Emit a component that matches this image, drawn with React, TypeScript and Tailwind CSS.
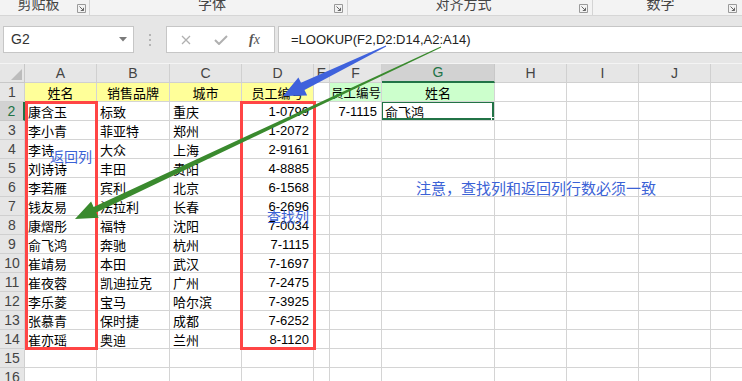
import React from "react";

const COLS = ["A", "B", "C", "D", "E", "F", "G", "H", "I", "J", ""];

type Cell = { t: string; align?: "l" | "c" | "r"; bg?: string; small?: boolean };

const names = ["康含玉", "李小青", "李诗", "刘诗诗", "李若雁", "钱友易", "康熠彤", "俞飞鸿", "崔靖易", "崔夜蓉", "李乐菱", "张慕青", "崔亦瑶"];
const brands = ["标致", "菲亚特", "大众", "丰田", "宾利", "法拉利", "福特", "奔驰", "本田", "凯迪拉克", "宝马", "保时捷", "奥迪"];
const cities = ["重庆", "郑州", "上海", "贵阳", "北京", "长春", "沈阳", "杭州", "武汉", "广州", "哈尔滨", "成都", "兰州"];
const ids = ["1-0799", "1-2072", "2-9161", "4-8885", "6-1568", "6-2696", "7-0034", "7-1115", "7-1697", "7-2475", "7-3925", "7-6252", "8-1120"];

function buildRows(): Cell[][] {
  const rows: Cell[][] = [];
  const Y = "bg-[#ffff99]";
  const G = "bg-[#ccffcc]";
  rows.push([
    { t: "姓名", align: "c", bg: Y },
    { t: "销售品牌", align: "c", bg: Y },
    { t: "城市", align: "c", bg: Y },
    { t: "员工编号", align: "c", bg: Y },
    { t: "" },
    { t: "员工编号", align: "l", bg: G, small: true },
    { t: "姓名", align: "c", bg: G },
    { t: "" },
    { t: "" },
    { t: "" },
    { t: "" },
  ]);
  for (let i = 0; i < 13; i++) {
    rows.push([
      { t: names[i] },
      { t: brands[i] },
      { t: cities[i] },
      { t: ids[i], align: "r" },
      { t: "" },
      { t: i === 0 ? "7-1115" : "", align: "r" },
      { t: i === 0 ? "俞飞鸿" : "" },
      { t: "" },
      { t: "" },
      { t: "" },
      { t: "" },
    ]);
  }
  for (let i = 0; i < 2; i++) {
    rows.push(Array.from({ length: 11 }, () => ({ t: "" })));
  }
  return rows;
}

function arrowPoints(sx: number, sy: number, tx: number, ty: number, w0: number, w1: number, hl: number, hw: number) {
  const dx = tx - sx;
  const dy = ty - sy;
  const len = Math.sqrt(dx * dx + dy * dy);
  const ux = dx / len;
  const uy = dy / len;
  const nx = -uy;
  const ny = ux;
  const bx = tx - ux * hl;
  const by = ty - uy * hl;
  const pts = [
    [sx + nx * w0, sy + ny * w0],
    [bx + nx * w1, by + ny * w1],
    [bx + nx * hw, by + ny * hw],
    [tx, ty],
    [bx - nx * hw, by - ny * hw],
    [bx - nx * w1, by - ny * w1],
    [sx - nx * w0, sy - ny * w0],
  ];
  return pts.map((p) => `${p[0].toFixed(1)},${p[1].toFixed(1)}`).join(" ");
}

function Launcher() {
  return (
    <svg width="9" height="9" viewBox="0 0 9 9" className="shrink-0">
      <path d="M0.5 0.5H8.5V8.5H0.5Z" fill="none" stroke="#9a9a9a" strokeWidth="1" />
      <path d="M2.5 2.5L6.5 6.5M6.5 3.8V6.5H3.8" fill="none" stroke="#666" strokeWidth="1" />
    </svg>
  );
}

function Group({ w, label, pr, border = true }: { w: string; label: string; pr: string; border?: boolean }) {
  return (
    <div className={`${w} h-full flex items-start ${border ? "border-r border-[#d4d4d4]" : ""}`}>
      <div className="flex-1 text-center text-[14px] leading-[14px] -mt-[4px] text-[#444]">{label}</div>
      <div className={`mt-[4px] ${pr}`}>
        <Launcher />
      </div>
    </div>
  );
}

export default function App() {
  const rows = buildRows();
  const cjk = { fontFamily: '"Noto Sans CJK SC", "Noto Sans", sans-serif' };
  return (
    <div className="relative w-[742px] h-[381px] overflow-hidden bg-white" style={cjk}>
      {/* Ribbon group labels */}
      <div className="h-[16px] bg-[#f3f3f3] border-b border-[#d6d6d6] flex overflow-hidden">
        <Group w="w-[90px]" label="剪贴板" pr="pr-[3px]" />
        <Group w="w-[258px]" label="字体" pr="pr-[4px]" />
        <Group w="w-[245px]" label="对齐方式" pr="pr-[4px]" />
        <Group w="w-[149px]" label="数字" pr="pr-[5px]" border={false} />
      </div>
      {/* Formula bar */}
      <div className="h-[47px] bg-[#e6e6e6] pt-[10px] flex items-start">
        <div className="ml-[3px] w-[131px] h-[27px] bg-white border border-[#c6c6c6] flex items-center pl-[7px] pr-[6px]">
          <span className="flex-1 text-[14px] text-[#333]" style={{ fontFamily: '"Liberation Sans", sans-serif' }}>G2</span>
          <svg width="8" height="5" viewBox="0 0 8 5">
            <path d="M0 0H8L4 4.5Z" fill="#7a7a7a" />
          </svg>
        </div>
        <div className="w-[32px] h-[27px] flex flex-col items-center justify-center gap-[3px]">
          <div className="w-[2px] h-[2px] bg-[#b4b4b4]" />
          <div className="w-[2px] h-[2px] bg-[#b4b4b4]" />
          <div className="w-[2px] h-[2px] bg-[#b4b4b4]" />
        </div>
        <div className="w-[109px] h-[27px] bg-white border border-[#c6c6c6] flex items-center">
          <svg width="10" height="10" viewBox="0 0 10 10" className="ml-[14px]">
            <path d="M1 1L9 9M9 1L1 9" stroke="#b0b0b0" strokeWidth="1.3" />
          </svg>
          <svg width="14" height="10" viewBox="0 0 14 10" className="ml-[23px]">
            <path d="M1 5L5 9L13 1" fill="none" stroke="#b0b0b0" strokeWidth="2" />
          </svg>
          <span className="ml-[21px] text-[14px] italic text-[#555]" style={{ fontFamily: '"Liberation Serif", serif' }}>
            <span className="font-bold">f</span>x
          </span>
        </div>
        <div className="ml-[3px] flex-1 h-[27px] bg-white border border-[#c6c6c6] border-r-0 flex items-center pl-[12px]">
          <span className="text-[13px] text-[#222]" style={{ fontFamily: '"Liberation Sans", sans-serif' }}>
            =LOOKUP(F2,D2:D14,A2:A14)
          </span>
        </div>
      </div>
      {/* Grid */}
      <div className="grid grid-cols-[25px_72px_73px_72px_72px_16px_52px_113px_72px_72px_72px_72px] auto-rows-[19px] border-t border-[#f4f4f4]">
        {/* Header row */}
        <div className="relative bg-[#e6e6e6] border-r border-b border-[#c8c8c8]">
          <svg width="11" height="11" viewBox="0 0 11 11" className="absolute right-[2px] bottom-[2px]">
            <path d="M11 0V11H0Z" fill="#bcbcbc" />
          </svg>
        </div>
        {COLS.map((c, i) => (
          <div
            key={"h" + i}
            className={`flex items-center justify-center text-[14px] ${
              c === "G"
                ? "bg-[#d2d2d2] text-[#217346] border-r border-b-2 border-r-[#c8c8c8] border-b-[#217346]"
                : "bg-[#e6e6e6] text-[#444] border-r border-b border-[#d0d0d0]"
            }`}
            style={{ fontFamily: '"Liberation Sans", sans-serif' }}
          >
            {c}
          </div>
        ))}
        {rows.map((r, ri) => (
          <React.Fragment key={"r" + ri}>
            <div
              className={`flex items-center justify-center text-[14px] ${
                ri === 1
                  ? "bg-[#d2d2d2] text-[#217346] border-r-2 border-b border-r-[#217346] border-b-[#c8c8c8]"
                  : "bg-[#e6e6e6] text-[#444] border-r border-b border-[#d0d0d0]"
              }`}
              style={{ fontFamily: '"Liberation Sans", sans-serif' }}
            >
              {ri + 1}
            </div>
            {r.map((c, ci) => {
              const selected = ri === 1 && ci === 6;
              const al = c.align === "c" ? "justify-center" : c.align === "r" ? "justify-end pr-[4px]" : c.small ? "justify-start pl-[1px]" : "justify-start pl-[3px]";
              const isNum = c.align === "r";
              return (
                <div
                  key={"c" + ci}
                  className={`relative flex items-center pt-[2px] ${c.small ? "text-[12.5px]" : "text-[13px]"} text-black whitespace-nowrap border-r border-b border-[#d4d4d4] ${al} ${c.bg ?? ""} overflow-hidden`}
                  style={isNum ? { fontFamily: '"Liberation Sans", sans-serif' } : undefined}
                >
                  {c.t}
                  {selected && (
                    <>
                      <div className="absolute -left-[1px] -top-[1px] right-0 bottom-0 border-2 border-[#217346]" />
                      <div className="absolute -right-[3px] -bottom-[3px] w-[6px] h-[6px] bg-[#217346] border border-white" />
                    </>
                  )}
                </div>
              );
            })}
          </React.Fragment>
        ))}
      </div>
      {/* Red boxes */}
      <div className="absolute left-[25px] top-[101px] w-[73px] h-[249px] border-[3px] border-[#ff4545]" />
      <div className="absolute left-[240px] top-[101px] w-[76px] h-[249px] border-[3px] border-[#ff4545]" />
      {/* Labels */}
      <div className="absolute left-[50px] top-[146px] text-[14px] leading-[20px] text-[#3b62d6]">返回列</div>
      <div className="absolute left-[267px] top-[206px] text-[14px] leading-[20px] text-[#3b62d6]">查找列</div>
      <div className="absolute left-[416px] top-[178px] text-[15px] leading-[20px] text-[#3b62d6]">
        注意，查找列和返回列行数必须一致
      </div>
      {/* Arrows */}
      <svg className="absolute left-0 top-0 pointer-events-none" width="742" height="381" viewBox="0 0 742 381">
        <polygon points={arrowPoints(386, 46, 283, 96, 0.5, 4, 22, 10)} fill="#3f62dc" />
        <polygon points={arrowPoints(441, 47, 75, 219, 0.5, 3, 22, 9)} fill="#3a8a2e" />
      </svg>
    </div>
  );
}
